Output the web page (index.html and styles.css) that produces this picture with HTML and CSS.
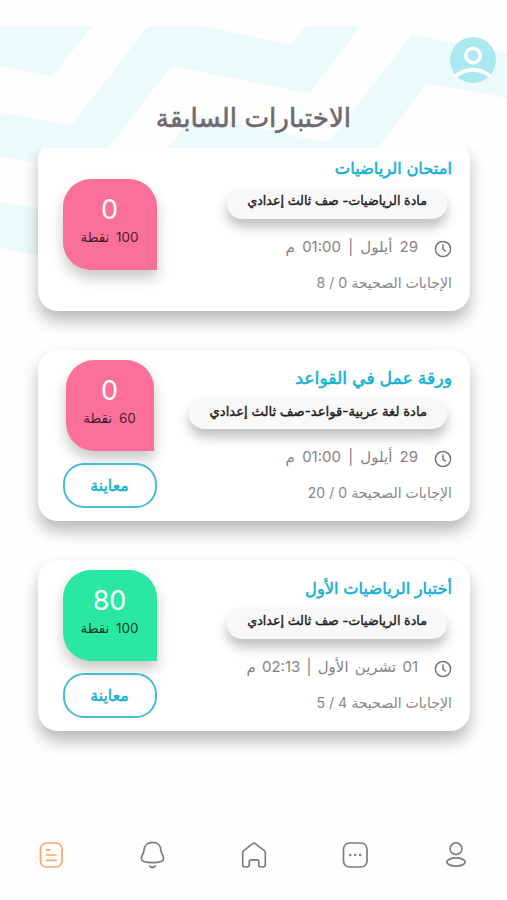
FILE: index.html
```html
<!DOCTYPE html>
<html lang="ar" dir="rtl">
<head>
  <meta charset="UTF-8">
  <meta name="viewport" content="width=device-width, initial-scale=1.0">
  <title>الاختبارات السابقة</title>
  <link rel="stylesheet" href="styles.css">
</head>
<body>
  <div class="app">
    <!-- Background waves -->
    <svg class="waves" viewBox="0 0 507 260" fill="#edfafc">
      <path d="M0 26H92L55 73Q52 76 49 76L0 66Z"/>
      <path d="M148 26H203L288 44Q292 45 294 42L303 29Q306 26 310 26H361L311 91Q309 94 306 93L176 67Q172 66 170 68L90 172L0 157V112L68 125Q71 125 73 123Z"/>
      <path d="M167 148L191 118Q194 114 198 115L325 142Q328 142 330 140L411 36Q412 34 414 35L507 53V98L431 84Q427 83 425 86L378 148Z"/>
      <path d="M0 202L60 213V259L0 248Z"/>
    </svg>

    <header class="header">
      <svg class="avatar" viewBox="0 0 46 46">
        <circle cx="23" cy="23" r="23" fill="#ace8f0"/>
        <circle cx="23" cy="18.5" r="7.2" fill="none" stroke="#fff" stroke-width="3.6"/>
        <path d="M5 39.5Q23 26 41 39.5" fill="none" stroke="#fff" stroke-width="3.8"/>
      </svg>
      <h1 class="title">الاختبارات السابقة</h1>
    </header>

    <main class="list">
      <article class="card">
        <div class="info">
          <h2 class="name">امتحان الرياضيات</h2>
          <p class="subject">مادة الرياضيات- صف ثالث إعدادي</p>
          <p class="date">
            <svg class="clock" viewBox="0 0 18 18"><circle cx="9" cy="9" r="7.6"/><path d="M9 4.5V9.3L12 11.5"/></svg>
            <span>29 أيلول | 01:00 م</span>
          </p>
          <p class="answers">الإجابات الصحيحة 0 / 8</p>
        </div>
        <div class="side">
          <div class="score low"><b>0</b><span>100 نقطة</span></div>
        </div>
      </article>

      <article class="card">
        <div class="info">
          <h2 class="name large">ورقة عمل في القواعد</h2>
          <p class="subject large">مادة لغة عربية-قواعد-صف ثالث إعدادي</p>
          <p class="date">
            <svg class="clock" viewBox="0 0 18 18"><circle cx="9" cy="9" r="7.6"/><path d="M9 4.5V9.3L12 11.5"/></svg>
            <span>29 أيلول | 01:00 م</span>
          </p>
          <p class="answers">الإجابات الصحيحة 0 / 20</p>
        </div>
        <div class="side">
          <div class="score low narrow"><b>0</b><span>60 نقطة</span></div>
          <button class="preview">معاينة</button>
        </div>
      </article>

      <article class="card">
        <div class="info">
          <h2 class="name">أختبار الرياضيات الأول</h2>
          <p class="subject">مادة الرياضيات- صف ثالث إعدادي</p>
          <p class="date tight">
            <svg class="clock" viewBox="0 0 18 18"><circle cx="9" cy="9" r="7.6"/><path d="M9 4.5V9.3L12 11.5"/></svg>
            <span>01 تشرين الأول | 02:13 م</span>
          </p>
          <p class="answers">الإجابات الصحيحة 4 / 5</p>
        </div>
        <div class="side">
          <div class="score high"><b>80</b><span>100 نقطة</span></div>
          <button class="preview">معاينة</button>
        </div>
      </article>
    </main>

    <nav class="tabs">
      <svg viewBox="0 0 28 28"><circle cx="14" cy="7.8" r="5.9"/><ellipse cx="14" cy="21" rx="9.2" ry="4.1"/></svg>
      <svg viewBox="0 0 28 28"><rect x="2.5" y="2" width="23.5" height="24" rx="6"/><path class="dots" d="M9.2 14h.01M14.2 14h.01M19.2 14h.01"/></svg>
      <svg viewBox="0 0 28 28"><path d="M2.7 12Q2.7 10.4 4 9.4L12.5 2.8Q14 1.6 15.500 2.8L24 9.4Q25.3 10.4 25.3 12V23.800Q25.3 26 23 26H21Q18.700 26 18.700 23.800V20.500Q18.700 18.800 17 18.800H11Q9.300 18.800 9.300 20.500V23.800Q9.300 26 7 26H5Q2.700 26 2.700 23.800Z"/></svg>
      <svg viewBox="0 0 28 28"><path d="M14.500 1.400C9.500 1.400 6.300 4.800 6 9.200C5.700 13.500 3.400 13.700 3.400 17.500C3.400 20.300 8.500 21.600 14.500 21.600S25.600 20.300 25.600 17.500C25.600 13.700 23.300 13.500 23 9.200C22.700 4.800 19.500 1.400 14.500 1.400Z"/><path d="M11.700 25.200Q14.500 27.800 17.300 25.200"/></svg>
      <svg class="active" viewBox="0 0 28 28"><rect x="3.500" y="2" width="21.500" height="24" rx="6"/><path d="M9.500 8.800H13M9.500 14H19.100M9.500 19.300H19.100"/></svg>
    </nav>
  </div>
</body>
</html>
```

FILE: styles.css
```css
* {
  box-sizing: border-box;
}
body {
  margin: 0;
  background: #fefefe;
  font-family: Inter, "DejaVu Sans", sans-serif;
}
h1, h2, p {
  margin: 0;
  font-weight: normal;
  white-space: nowrap;
}
.app {
  position: relative;
  display: flex;
  flex-direction: column;
  height: 900px;
  overflow: hidden;
}
.waves {
  position: absolute;
  top: 0;
  left: 0;
  width: 507px;
  height: 260px;
}
.header {
  position: relative;
  height: 148px;
  padding: 37px 11px 0;
}
.avatar {
  display: block;
  width: 46px;
  height: 46px;
}
.title {
  margin-top: 17px;
  text-align: center;
  font-size: 26.2px;
  line-height: 36px;
  color: #6f6a6e;
  -webkit-text-stroke: 0.6px #6f6a6e;
}
.list {
  position: relative;
  flex: 1;
  overflow: hidden;
  padding: 0 37px 0 38px;
}
.card {
  display: flex;
  justify-content: space-between;
  height: 171px;
  margin-bottom: 39px;
  padding: 13px 18px 0 24px;
  background: #fff;
  border-radius: 20px;
  box-shadow: 0 10px 16px rgba(0, 0, 0, 0.27);
}
.card:first-child {
  margin-top: -8px;
}
.info {
  display: flex;
  flex-direction: column;
  align-items: flex-start;
}
.name {
  font-size: 16.3px;
  line-height: 30px;
  color: #14b0d4;
  -webkit-text-stroke: 0.5px #14b0d4;
}
.name.large {
  font-size: 17.3px;
}
.subject {
  height: 31px;
  margin: 5px 5px 0;
  padding: 0 20px;
  border-radius: 15px;
  background: #f8f8f8;
  box-shadow: 0 8px 12px rgba(0, 0, 0, 0.25);
  font-size: 12.7px;
  line-height: 26px;
  color: #222;
  -webkit-text-stroke: 0.4px #222;
}
.subject.large {
  font-size: 13.2px;
}
.date {
  display: flex;
  align-items: center;
  gap: 16px;
  height: 24px;
  margin-top: 15px;
  font-size: 15px;
  word-spacing: 3px;
  color: #858285;
}
.date.tight {
  word-spacing: 2px;
}
.clock {
  width: 18px;
  height: 18px;
  margin-top: 5px;
  fill: none;
  stroke: #777;
  stroke-width: 1.5;
}
.answers {
  margin-top: 13px;
  font-size: 14.1px;
  line-height: 24px;
  color: #8a878a;
}
.side {
  display: flex;
  flex-direction: column;
  align-items: center;
  width: 95px;
  padding-top: 26px;
}
.card:not(:first-child) .side {
  padding-top: 0;
  margin-top: -3px;
}
.score {
  display: flex;
  flex-direction: column;
  align-items: center;
  width: 94px;
  height: 91px;
  padding-top: 15px;
  border-radius: 28px 28px 0 28px;
  box-shadow: 0 8px 14px rgba(0, 0, 0, 0.22);
}
.score.narrow {
  width: 88px;
}
.score b {
  font-size: 27px;
  font-weight: normal;
  line-height: 32px;
  color: #fff;
}
.score span {
  font-size: 13.5px;
  line-height: 23px;
  word-spacing: 3px;
  color: rgba(0, 0, 0, 0.75);
}
.low {
  background: #fa7099;
}
.high {
  background: #2ae8a1;
}
.preview {
  width: 94px;
  height: 45px;
  margin-top: 12px;
  padding: 0;
  border: 2px solid #45bdd8;
  border-radius: 21px;
  background: transparent;
  font: 15.8px Inter, "DejaVu Sans", sans-serif;
  color: #14b0d4;
  -webkit-text-stroke: 0.5px #14b0d4;
}
.tabs {
  position: relative;
  display: flex;
  justify-content: space-between;
  height: 78px;
  padding: 18px 37px 0;
  border-top: 1px solid #fafafa;
  background: #fefefe;
}
.tabs svg {
  width: 28px;
  height: 28px;
  fill: none;
  stroke: #7e7e7e;
  stroke-width: 1.7;
  stroke-linecap: round;
  stroke-linejoin: round;
}
.tabs .dots {
  stroke-width: 2.5;
}
.tabs .active {
  stroke: #f9a66f;
}
```
